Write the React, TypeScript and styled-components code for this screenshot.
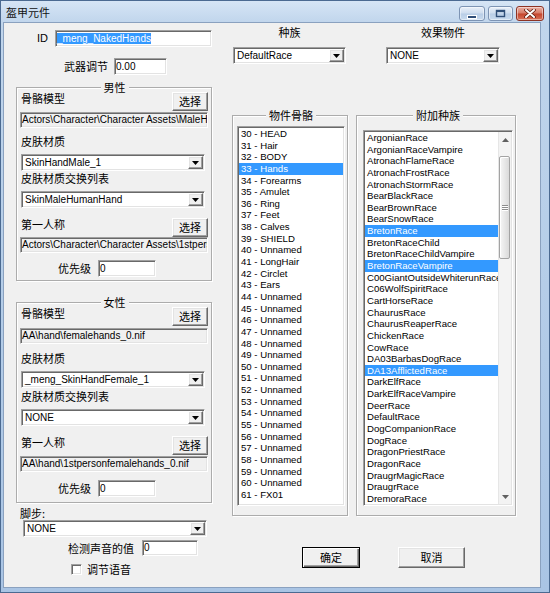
import styled, { createGlobalStyle, css } from "styled-components";

const CJK = `"Noto Sans CJK SC", "Liberation Sans", sans-serif`;
const LATIN = `"Liberation Sans", "Noto Sans CJK SC", sans-serif`;

const GlobalStyle = createGlobalStyle`
  html, body {
    margin: 0;
    padding: 0;
    background: #ffffff;
  }
  body {
    font-family: ${LATIN};
    font-size: 10px;
    color: #000;
  }
  * {
    box-sizing: border-box;
  }
`;

const sunken = css`
  border: 1px solid;
  border-color: #a0a0a0 #ffffff #ffffff #a0a0a0;
  box-shadow: inset 1px 1px 0 #696969, inset -1px -1px 0 #e3e3e3;
  padding: 1px;
`;

const raised = css`
  border: 1px solid;
  border-color: #ffffff #696969 #696969 #ffffff;
  box-shadow: inset -1px -1px 0 #a0a0a0, inset 1px 1px 0 #e3e3e3;
  background: #f0f0f0;
`;

const Window = styled.div`
  width: 550px;
  height: 593px;
  display: flex;
  flex-direction: column;
  padding: 0 9px 5px 3px;
  border: 1px solid #4b6a91;
  background: linear-gradient(to bottom, #d6e5f5 0, #c0d5ec 22px, #b2cbe7 60%, #a9c4e4 100%);
`;

const TitleBar = styled.div`
  height: 22px;
  display: flex;
  align-items: flex-start;
  padding-left: 2px;
`;

const TitleText = styled.span`
  font-family: ${CJK};
  font-size: 11px;
  line-height: 22px;
  color: #101010;
`;

const CaptionGroup = styled.div`
  margin-left: auto;
  margin-right: -4px;
  margin-top: 5px;
  display: flex;
  gap: 3px;
`;

const CaptionButton = styled.div<{ $kind: "min" | "max" | "close" }>`
  width: ${(p) => (p.$kind === "close" ? 28 : p.$kind === "max" ? 25 : 26)}px;
  height: 15px;
  display: flex;
  align-items: center;
  justify-content: center;
  border-radius: 3px;
  border: 1px solid ${(p) => (p.$kind === "close" ? "#8e3324" : "#7d94b4")};
  box-shadow: inset 0 0 0 1px rgba(255, 255, 255, 0.45);
  background: ${(p) =>
    p.$kind === "close"
      ? "linear-gradient(to bottom, #eab0a4 0%, #d67a66 48%, #c4442c 52%, #d8735a 100%)"
      : "linear-gradient(to bottom, #e9f0f9 0%, #cddcee 48%, #b8cde6 52%, #c9dbef 100%)"};
`;

const Client = styled.div`
  flex: 1;
  display: flex;
  align-items: flex-start;
  padding-left: 12px;
  background: #f0f0f0;
  box-shadow: 0 0 0 1px #8aa1bf;
`;

const LeftColumn = styled.div`
  width: 196px;
  display: flex;
  flex-direction: column;
  padding-top: 7px;
`;

const FieldRow = styled.div<{ $indent: number; $mt?: number; $h?: number; $gap?: number }>`
  display: flex;
  align-items: center;
  padding-left: ${(p) => p.$indent}px;
  margin-top: ${(p) => p.$mt ?? 0}px;
  height: ${(p) => p.$h ?? 17}px;
  gap: ${(p) => p.$gap ?? 7}px;
`;

const Label = styled.span<{ $mt?: number; $ml?: number; $latin?: boolean }>`
  display: block;
  align-self: flex-start;
  margin-top: ${(p) => p.$mt ?? 0}px;
  margin-left: ${(p) => p.$ml ?? 0}px;
  font-family: ${(p) => (p.$latin ? LATIN : CJK)};
  font-size: 11px;
  line-height: 13px;
  white-space: nowrap;
`;

const RowLabel = styled(Label)`
  align-self: center;
`;

const TextBox = styled.div<{ $w?: number; $h?: number; $mt?: number; $ml?: number; $muted?: boolean; $grow?: boolean }>`
  ${sunken};
  width: ${(p) => (p.$w ? `${p.$w}px` : "auto")};
  flex: ${(p) => (p.$grow ? 1 : "none")};
  height: ${(p) => p.$h ?? 17}px;
  margin-top: ${(p) => p.$mt ?? 0}px;
  margin-left: ${(p) => p.$ml ?? 0}px;
  padding: 1px 2px 1px 1px;
  background: ${(p) => (p.$muted ? "#f0f0f0" : "#ffffff")};
  font-family: ${LATIN};
  font-size: 10px;
  line-height: ${(p) => (p.$h ?? 17) - 4}px;
  white-space: nowrap;
  overflow: hidden;
`;

const Selection = styled.span`
  background: #3399ff;
  color: #ffffff;
`;

const Combo = styled.div<{ $w: number; $mt?: number; $ml?: number }>`
  ${sunken};
  display: flex;
  align-self: flex-start;
  width: ${(p) => p.$w}px;
  height: 17px;
  margin-top: ${(p) => p.$mt ?? 0}px;
  margin-left: ${(p) => p.$ml ?? 0}px;
  background: #ffffff;
`;

const ComboValue = styled.span`
  flex: 1;
  padding-left: 2px;
  font-family: ${LATIN};
  font-size: 10px;
  line-height: 13px;
  white-space: nowrap;
  overflow: hidden;
`;

const ComboArrow = styled.span`
  ${raised};
  width: 15px;
  display: flex;
  align-items: center;
  justify-content: center;
`;

const PushButton = styled.button<{ $w: number; $h: number; $ml?: number; $default?: boolean }>`
  ${raised};
  width: ${(p) => p.$w}px;
  height: ${(p) => p.$h}px;
  margin: 0 0 0 ${(p) => p.$ml ?? 0}px;
  padding: 0;
  font-family: ${CJK};
  font-size: 11px;
  line-height: 1;
  color: #000;
  ${(p) =>
    p.$default &&
    css`
      border-color: #000000;
      box-shadow: inset 1px 1px 0 #ffffff, inset -1px -1px 0 #696969, inset -2px -2px 0 #a0a0a0;
    `}
`;

const Group = styled.fieldset<{ $w: number; $mt?: number; $ml?: number; $pad: string }>`
  width: ${(p) => p.$w}px;
  min-width: 0;
  margin: ${(p) => p.$mt ?? 0}px 0 0 ${(p) => p.$ml ?? 0}px;
  padding: ${(p) => p.$pad};
  border: 1px solid #acacac;
  box-shadow: 1px 1px 0 #ffffff, inset 1px 1px 0 #ffffff;
  display: flex;
  flex-direction: column;
`;

const GroupTitle = styled.legend`
  margin: 0 auto;
  padding: 0 3px;
  height: 10px;
  font-family: ${CJK};
  font-size: 11px;
  line-height: 10px;
  background: #f0f0f0;
`;

const CaptionRow = styled.div<{ $mt?: number }>`
  display: flex;
  align-items: center;
  justify-content: space-between;
  height: 19px;
  margin-top: ${(p) => p.$mt ?? 0}px;
`;

const RightArea = styled.div`
  margin-left: 16px;
  width: 288px;
  display: flex;
  flex-direction: column;
`;

const TopRow = styled.div`
  display: flex;
  padding-top: 3px;
`;

const TopCell = styled.div<{ $ml: number; $w: number }>`
  margin-left: ${(p) => p.$ml}px;
  width: ${(p) => p.$w}px;
  display: flex;
  flex-direction: column;
  align-items: center;
`;

const TopLabel = styled.span`
  font-family: ${CJK};
  font-size: 11px;
  line-height: 12px;
  margin-bottom: 9px;
`;

const GroupsRow = styled.div`
  display: flex;
  margin-top: 46px;
`;

const ListBox = styled.div<{ $mt: number; $h: number }>`
  ${sunken};
  display: flex;
  height: ${(p) => p.$h}px;
  margin-top: ${(p) => p.$mt}px;
  background: #ffffff;
  overflow: hidden;
`;

const ListItems = styled.ul`
  flex: 1;
  margin: 0;
  padding: 0;
  list-style: none;
  overflow: hidden;
`;

const ListItem = styled.li<{ $selected?: boolean }>`
  height: 11.65px;
  padding-left: 2px;
  font-family: ${LATIN};
  font-size: 9.6px;
  line-height: 11.65px;
  white-space: nowrap;
  background: ${(p) => (p.$selected ? "#3399ff" : "transparent")};
  color: ${(p) => (p.$selected ? "#ffffff" : "#000000")};
`;

const ScrollBar = styled.div`
  width: 13px;
  display: flex;
  flex-direction: column;
  background: #f3f3f3;
  border-left: 1px solid #e6e6e6;
`;

const ScrollArrow = styled.div`
  height: 15px;
  display: flex;
  align-items: center;
  justify-content: center;
`;

const ScrollTrack = styled.div`
  flex: 1;
  display: flex;
  flex-direction: column;
  padding: 9px 1px 0 0;
`;

const ScrollThumb = styled.div`
  height: 103px;
  border: 1px solid #a3a3a3;
  border-radius: 2px;
  background: linear-gradient(to right, #f6f6f6 0%, #e8e8e8 50%, #dadada 100%);
  box-shadow: inset 1px 1px 0 #ffffff;
  display: flex;
  flex-direction: column;
  align-items: center;
  justify-content: center;
  gap: 1px;
`;

const Grip = styled.span`
  width: 6px;
  height: 1px;
  background: #8d8d8d;
  box-shadow: 0 1px 0 #ffffff;
`;

const ButtonRow = styled.div`
  display: flex;
  margin-top: 31px;
`;

const CheckBox = styled.span`
  ${sunken};
  width: 11px;
  height: 11px;
  background: #ffffff;
`;

const DownTriangle = ({ color = "#000" }: { color?: string }) => (
  <svg width="7" height="4" viewBox="0 0 7 4">
    <path d="M0 0h7L3.5 4z" fill={color} />
  </svg>
);

const UpTriangle = ({ color = "#000" }: { color?: string }) => (
  <svg width="7" height="4" viewBox="0 0 7 4">
    <path d="M0 4h7L3.5 0z" fill={color} />
  </svg>
);

function ComboBox({ value, w, mt, ml }: { value: string; w: number; mt?: number; ml?: number }) {
  return (
    <Combo $w={w} $mt={mt} $ml={ml}>
      <ComboValue>{value}</ComboValue>
      <ComboArrow>
        <DownTriangle />
      </ComboArrow>
    </Combo>
  );
}

type GenderGroupProps = {
  title: string;
  model: string;
  skin: string;
  swap: string;
  firstPerson: string;
  mt: number;
  loose?: boolean;
};

// one "男性"/"女性" block: model path, skin, swap list, first person path, priority
function GenderGroup({ title, model, skin, swap, firstPerson, mt, loose }: GenderGroupProps) {
  const g = loose ? 1 : 0;
  return (
    <Group $w={196} $mt={mt} $pad={`0 3px ${loose ? 5 : 3}px 4px`}>
      <GroupTitle>{title}</GroupTitle>
      <CaptionRow>
        <Label>骨骼模型</Label>
        <PushButton $w={36} $h={19}>选择</PushButton>
      </CaptionRow>
      <TextBox $muted $h={16} $mt={1 + g} $ml={-1}>{model}</TextBox>
      <Label $mt={7 + g}>皮肤材质</Label>
      <ComboBox value={skin} w={184} mt={6} />
      <Label $mt={1 + g}>皮肤材质交换列表</Label>
      <ComboBox value={swap} w={184} mt={6} />
      <CaptionRow $mt={10}>
        <Label>第一人称</Label>
        <PushButton $w={36} $h={19}>选择</PushButton>
      </CaptionRow>
      <TextBox $muted $h={16} $mt={g} $ml={-1}>{firstPerson}</TextBox>
      <FieldRow $indent={37} $mt={7 + g}>
        <RowLabel>优先级</RowLabel>
        <TextBox $w={58}>0</TextBox>
      </FieldRow>
    </Group>
  );
}

const BODY_PARTS = [
  "30 - HEAD",
  "31 - Hair",
  "32 - BODY",
  "33 - Hands",
  "34 - Forearms",
  "35 - Amulet",
  "36 - Ring",
  "37 - Feet",
  "38 - Calves",
  "39 - SHIELD",
  "40 - Unnamed",
  "41 - LongHair",
  "42 - Circlet",
  "43 - Ears",
  ...Array.from({ length: 17 }, (_, i) => `${44 + i} - Unnamed`),
  "61 - FX01",
];

const RACES = [
  "ArgonianRace",
  "ArgonianRaceVampire",
  "AtronachFlameRace",
  "AtronachFrostRace",
  "AtronachStormRace",
  "BearBlackRace",
  "BearBrownRace",
  "BearSnowRace",
  "BretonRace",
  "BretonRaceChild",
  "BretonRaceChildVampire",
  "BretonRaceVampire",
  "C00GiantOutsideWhiterunRace",
  "C06WolfSpiritRace",
  "CartHorseRace",
  "ChaurusRace",
  "ChaurusReaperRace",
  "ChickenRace",
  "CowRace",
  "DA03BarbasDogRace",
  "DA13AfflictedRace",
  "DarkElfRace",
  "DarkElfRaceVampire",
  "DeerRace",
  "DefaultRace",
  "DogCompanionRace",
  "DogRace",
  "DragonPriestRace",
  "DragonRace",
  "DraugrMagicRace",
  "DraugrRace",
  "DremoraRace",
];

const PICKED_RACES = new Set(["BretonRace", "BretonRaceVampire", "DA13AfflictedRace"]);

export default function App() {
  return (
    <>
      <GlobalStyle />
      <Window>
        <TitleBar>
          <TitleText>盔甲元件</TitleText>
          <CaptionGroup>
            <CaptionButton $kind="min">
              <svg width="10" height="12" viewBox="0 0 10 12">
                <rect x="0.5" y="7.5" width="9" height="3" fill="#2f4e78" stroke="#ffffff" strokeWidth="1" />
              </svg>
            </CaptionButton>
            <CaptionButton $kind="max">
              <svg width="11" height="9" viewBox="0 0 11 9">
                <rect x="1.5" y="1.5" width="8" height="6" fill="none" stroke="#2f4e78" strokeWidth="1.4" />
                <rect x="1.5" y="1.5" width="8" height="1.6" fill="#2f4e78" />
              </svg>
            </CaptionButton>
            <CaptionButton $kind="close">
              <svg width="12" height="9" viewBox="0 0 12 9">
                <path d="M2 1l8 7M10 1L2 8" stroke="#5e1a0e" strokeWidth="3.6" strokeLinecap="round" />
                <path d="M2 1l8 7M10 1L2 8" stroke="#ffffff" strokeWidth="2" strokeLinecap="round" />
              </svg>
            </CaptionButton>
          </CaptionGroup>
        </TitleBar>

        <Client>
          <LeftColumn>
            <FieldRow $indent={21}>
              <RowLabel $latin>ID</RowLabel>
              <TextBox $grow>
                <Selection>_meng_NakedHands</Selection>
              </TextBox>
            </FieldRow>
            <FieldRow $indent={48} $mt={11} $gap={6}>
              <RowLabel>武器调节</RowLabel>
              <TextBox $w={53}>0.00</TextBox>
            </FieldRow>

            <GenderGroup
              title="男性"
              mt={7}
              model={"Actors\\Character\\Character Assets\\MaleHands_1.nif"}
              skin="SkinHandMale_1"
              swap="SkinMaleHumanHand"
              firstPerson={"Actors\\Character\\Character Assets\\1stpersonmalehands_1.nif"}
            />
            <GenderGroup
              title="女性"
              mt={16}
              loose
              model={"AA\\hand\\femalehands_0.nif"}
              skin="_meng_SkinHandFemale_1"
              swap="NONE"
              firstPerson={"AA\\hand\\1stpersonfemalehands_0.nif"}
            />

            <Label $mt={4} $ml={4}>脚步:</Label>
            <ComboBox value="NONE" w={184} ml={7} />
            <FieldRow $indent={52} $mt={3} $h={16} $gap={8}>
              <RowLabel>检测声音的值</RowLabel>
              <TextBox $w={56} $h={16}>0</TextBox>
            </FieldRow>
            <FieldRow $indent={55} $mt={8} $h={11} $gap={5}>
              <CheckBox />
              <RowLabel>调节语音</RowLabel>
            </FieldRow>
          </LeftColumn>

          <RightArea>
            <TopRow>
              <TopCell $ml={5} $w={113}>
                <TopLabel>种族</TopLabel>
                <ComboBox value="DefaultRace" w={113} />
              </TopCell>
              <TopCell $ml={40} $w={114}>
                <TopLabel>效果物件</TopLabel>
                <ComboBox value="NONE" w={114} />
              </TopCell>
            </TopRow>

            <GroupsRow>
              <Group $w={116} $ml={4} $pad="0 2px 9px 4px">
                <GroupTitle>物件骨骼</GroupTitle>
                <ListBox $mt={6} $h={380}>
                  <ListItems>
                    {BODY_PARTS.map((part) => (
                      <ListItem key={part} $selected={part === "33 - Hands"}>
                        {part}
                      </ListItem>
                    ))}
                  </ListItems>
                </ListBox>
              </Group>
              <Group $w={160} $ml={8} $pad="0 2px 9px 6px">
                <GroupTitle>附加种族</GroupTitle>
                <ListBox $mt={10} $h={376}>
                  <ListItems>
                    {RACES.map((race) => (
                      <ListItem key={race} $selected={PICKED_RACES.has(race)}>
                        {race}
                      </ListItem>
                    ))}
                  </ListItems>
                  <ScrollBar>
                    <ScrollArrow>
                      <UpTriangle color="#606060" />
                    </ScrollArrow>
                    <ScrollTrack>
                      <ScrollThumb>
                        <Grip />
                        <Grip />
                        <Grip />
                      </ScrollThumb>
                    </ScrollTrack>
                    <ScrollArrow>
                      <DownTriangle color="#606060" />
                    </ScrollArrow>
                  </ScrollBar>
                </ListBox>
              </Group>
            </GroupsRow>

            <ButtonRow>
              <PushButton $w={58} $h={21} $ml={74} $default>
                确定
              </PushButton>
              <PushButton $w={67} $h={21} $ml={38}>
                取消
              </PushButton>
            </ButtonRow>
          </RightArea>
        </Client>
      </Window>
    </>
  );
}
